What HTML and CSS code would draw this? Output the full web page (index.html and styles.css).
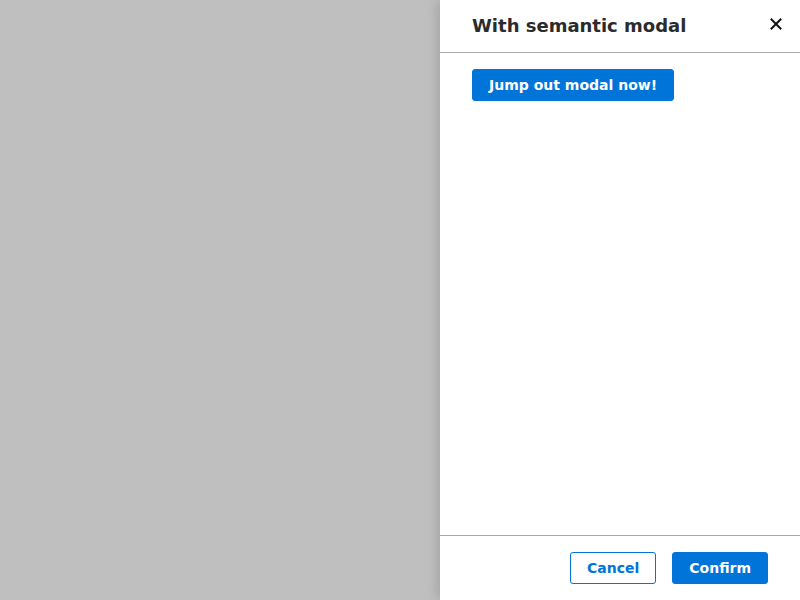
FILE: index.html
```html
<!DOCTYPE html>
<html>
<head>
<meta charset="utf-8">
<link rel="stylesheet" href="styles.css">
</head>
<body>
<div class="backdrop">
  <aside class="drawer" role="dialog" aria-labelledby="dlg-title">
    <header class="drawer-header">
      <h2 id="dlg-title" class="drawer-title">With semantic modal</h2>
      <button class="close-btn" aria-label="Close">
        <svg width="12" height="12" viewBox="0 0 12 12"><path d="M1.5 1.5L10.5 10.5M10.5 1.5L1.5 10.5" stroke="#111" stroke-width="2" stroke-linecap="square"/></svg>
      </button>
    </header>
    <div class="drawer-body">
      <button class="btn btn-primary">Jump out modal now!</button>
    </div>
    <footer class="drawer-footer">
      <button class="btn btn-outline">Cancel</button>
      <button class="btn btn-primary">Confirm</button>
    </footer>
  </aside>
</div>
</body>
</html>
```

FILE: styles.css
```css
html, body {
  margin: 0;
  padding: 0;
  height: 100%;
}
body {
  font-family: "DejaVu Sans", sans-serif;
  background: #ffffff;
}
.backdrop {
  height: 100%;
  background: #bfbfbf;
  display: flex;
  justify-content: flex-end;
}
.drawer {
  width: 360px;
  height: 100%;
  background: #ffffff;
  display: flex;
  flex-direction: column;
  box-shadow: -4px 0 10px rgba(0, 0, 0, 0.12);
}
.drawer-header {
  height: 52px;
  border-bottom: 1px solid #a8a8a8;
  display: flex;
  align-items: center;
  justify-content: space-between;
  padding: 0 14px 0 32px;
  box-sizing: content-box;
}
.drawer-title {
  margin: 0 0 2px 0;
  font-size: 18px;
  font-weight: bold;
  color: #2b2b2b;
}
.close-btn {
  border: 0;
  background: none;
  padding: 4px;
  margin-top: -4px;
  display: flex;
  cursor: pointer;
}
.drawer-body {
  flex: 1;
  padding: 16px 32px;
}
.drawer-footer {
  border-top: 1px solid #a8a8a8;
  padding: 16px 32px;
  display: flex;
  justify-content: flex-end;
  gap: 16px;
}
.btn {
  font-family: "DejaVu Sans", sans-serif;
  font-size: 14px;
  font-weight: bold;
  height: 32px;
  padding: 0 16px;
  border-radius: 3px;
  border: 1px solid #0074d9;
  cursor: pointer;
}
.btn-primary {
  background: #0074d9;
  color: #ffffff;
}
.btn-outline {
  background: #ffffff;
  color: #0074d9;
}
```
